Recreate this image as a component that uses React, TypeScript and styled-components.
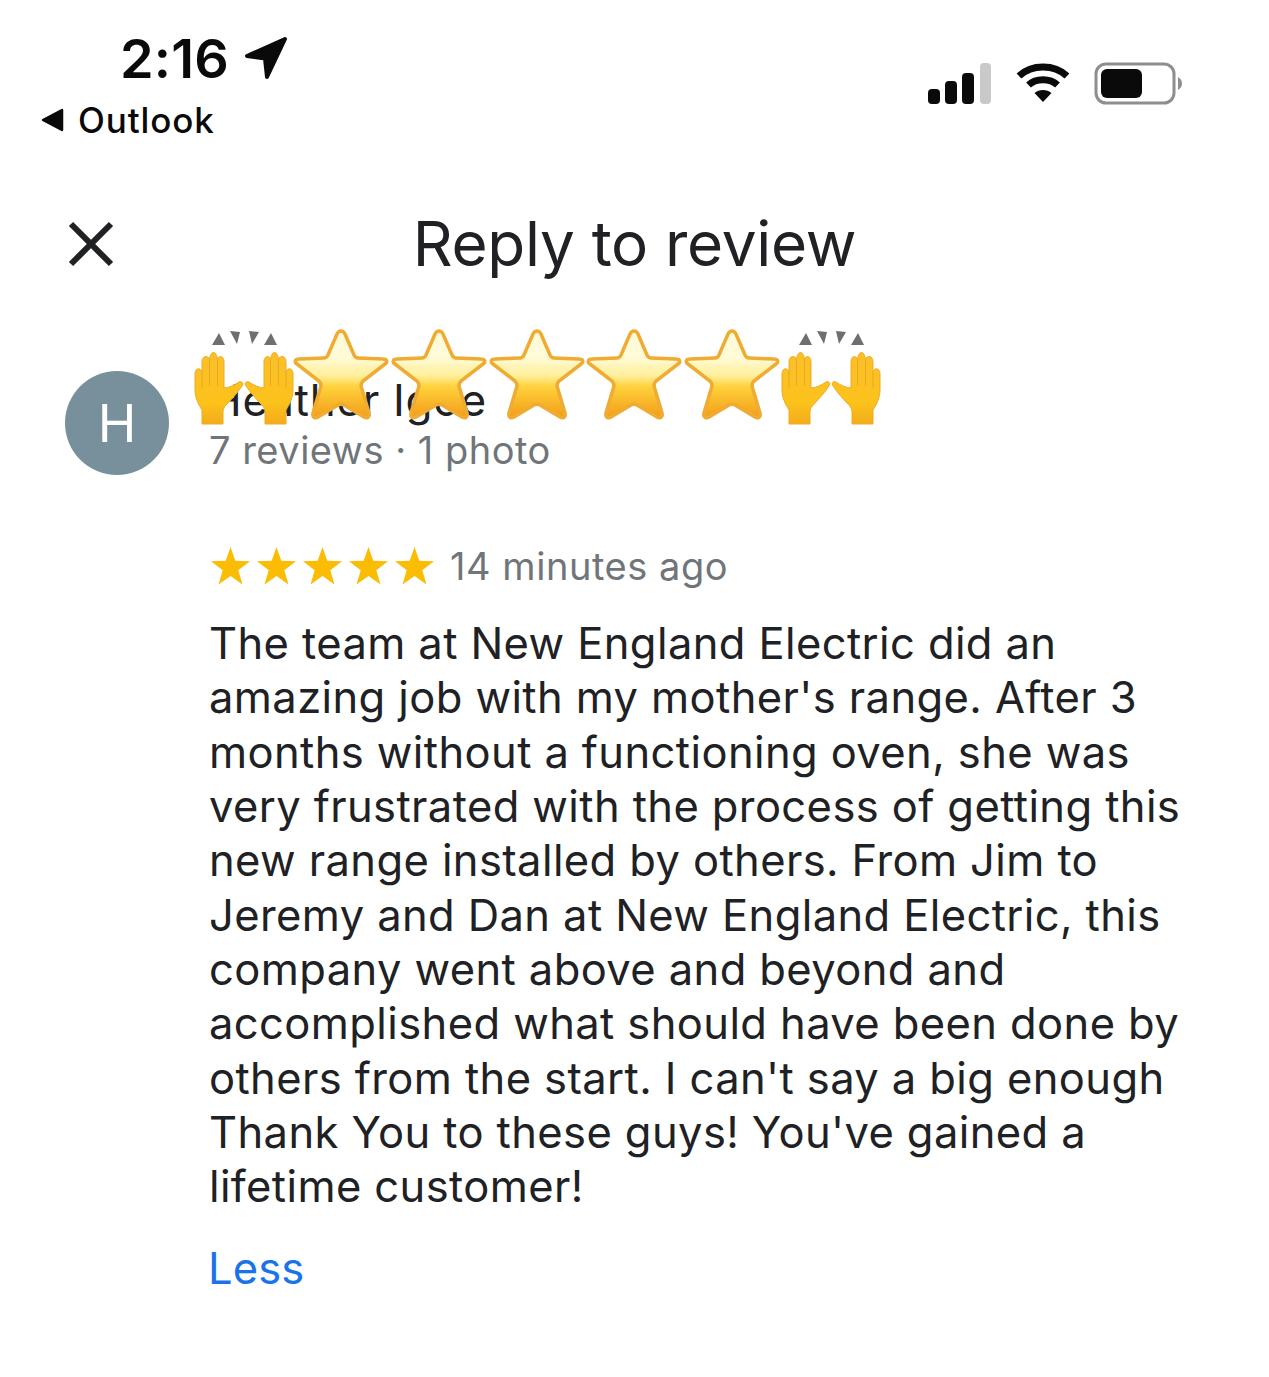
import styled, { createGlobalStyle } from 'styled-components';

const GlobalStyle = createGlobalStyle`
  html, body {
    margin: 0;
    padding: 0;
    background: #fff;
  }
`;

const Page = styled.div`
  width: 1269px;
  height: 1377px;
  overflow: hidden;
  background: #fff;
  color: #202124;
  font-family: Inter, "Liberation Sans", sans-serif;
`;

const StatusBar = styled.div`
  display: flex;
  justify-content: space-between;
  padding: 26px 86px 0 41px;
  height: 130px;
  box-sizing: border-box;
`;

const StatusLeft = styled.div`
  display: flex;
  flex-direction: column;
`;

const TimeRow = styled.div`
  display: flex;
  align-items: center;
  gap: 15px;
  margin-left: 79px;
  height: 64px;
`;

const Time = styled.span`
  font-size: 54px;
  font-weight: 600;
  letter-spacing: 0.2px;
  color: #0a0a0a;
`;

const BackRow = styled.div`
  display: flex;
  align-items: center;
  gap: 14px;
  height: 44px;
  margin-top: 9px;
`;

const BackLabel = styled.span`
  font-size: 35px;
  font-weight: 500;
  letter-spacing: 0.9px;
  color: #0a0a0a;
`;

const StatusRight = styled.div`
  display: flex;
  align-items: center;
  gap: 24px;
  height: 64px;
  margin-top: 26px;
`;

const Header = styled.div`
  display: flex;
  align-items: center;
  justify-content: center;
  position: relative;
  height: 82px;
  margin-top: 72px;
`;

const CloseButton = styled.button`
  position: absolute;
  left: 67px;
  top: 18px;
  padding: 0;
  border: 0;
  background: none;
  display: flex;
`;

const Title = styled.h1`
  margin: 0;
  font-size: 62px;
  font-weight: 400;
  letter-spacing: -0.3px;
  color: #202124;
`;

const Reviewer = styled.div`
  display: flex;
  align-items: center;
  gap: 40px;
  margin-top: 87px;
  padding-left: 65px;
  position: relative;
`;

const Avatar = styled.div`
  width: 104px;
  height: 104px;
  border-radius: 50%;
  background: #78909c;
  color: #fff;
  display: flex;
  align-items: center;
  justify-content: center;
  font-size: 52px;
`;

const ReviewerText = styled.div`
  display: flex;
  flex-direction: column;
  margin-top: 4px;
`;

const Name = styled.div`
  font-size: 44px;
  line-height: 50px;
  letter-spacing: 0.7px;
  color: #202124;
`;

const Meta = styled.div`
  font-size: 38px;
  line-height: 50px;
  letter-spacing: 0.5px;
  color: #70757a;
`;

const Sticker = styled.svg`
  position: absolute;
  left: 190px;
  top: -43px;
  filter: blur(0.6px);
`;

const Body = styled.div`
  padding-left: 209px;
  margin-top: 65px;
`;

const RatingRow = styled.div`
  display: flex;
  align-items: center;
  gap: 16px;
  height: 52px;
`;

const Stars = styled.div`
  display: flex;
  gap: 7px;
  margin-left: 2px;
`;

const Ago = styled.span`
  font-size: 38px;
  letter-spacing: 0.55px;
  color: #70757a;
`;

const ReviewText = styled.div`
  margin-top: 24px;
  font-size: 43.5px;
  line-height: 54.35px;
  letter-spacing: 0.4px;
  color: #202124;
`;

const Line = styled.div`
  white-space: nowrap;
`;

const Less = styled.a`
  display: block;
  margin-top: 27px;
  margin-left: -1px;
  font-size: 43.5px;
  line-height: 54px;
  letter-spacing: 0.1px;
  color: #1a73e8;
`;

const LINES = [
  'The team at New England Electric did an',
  "amazing job with my mother's range. After 3",
  'months without a functioning oven, she was',
  'very frustrated with the process of getting this',
  'new range installed by others. From Jim to',
  'Jeremy and Dan at New England Electric, this',
  'company went above and beyond and',
  'accomplished what should have been done by',
  "others from the start. I can't say a big enough",
  "Thank You to these guys! You've gained a",
  'lifetime customer!',
];

const LocationArrow = () => (
  <svg width="44" height="44" viewBox="0 0 44 44">
    <path d="M41 3 L3 20 L21 22.5 L23 41 Z" fill="#0a0a0a" stroke="#0a0a0a" strokeWidth="4" strokeLinejoin="round" />
  </svg>
);

const BackArrow = () => (
  <svg width="23" height="24" viewBox="0 0 23 24">
    <path d="M21 2 L2 12 L21 22 Z" fill="#0a0a0a" stroke="#0a0a0a" strokeWidth="2.5" strokeLinejoin="round" />
  </svg>
);

const SignalIcon = () => (
  <svg width="64" height="42" viewBox="0 0 64 42">
    <rect x="0" y="26" width="12" height="15" rx="4" fill="#0a0a0a" />
    <rect x="17" y="18" width="12" height="23" rx="4" fill="#0a0a0a" />
    <rect x="34" y="10" width="12" height="31" rx="4" fill="#0a0a0a" />
    <rect x="52" y="0" width="11" height="41" rx="4" fill="#c9c9c9" />
  </svg>
);

const WifiIcon = () => (
  <svg width="54" height="42" viewBox="0 0 54 42">
    <path d="M3 13 C16 1 38 1 51 13" fill="none" stroke="#0a0a0a" strokeWidth="7" />
    <path d="M12.5 22 C20 15 34 15 41.5 22" fill="none" stroke="#0a0a0a" strokeWidth="7" />
    <path d="M18.5 30 C23 26 31 26 35.5 30 L27 39 Z" fill="#0a0a0a" />
  </svg>
);

const BatteryIcon = () => (
  <svg width="89" height="44" viewBox="0 0 89 44">
    <rect x="2" y="2" width="78" height="39" rx="10" fill="none" stroke="#8e8e8e" strokeWidth="3" />
    <rect x="7" y="7" width="41" height="29" rx="6" fill="#0a0a0a" />
    <path d="M84 15 C87 17 88 19 88 21.5 C88 24 87 26 84 28 Z" fill="#8e8e8e" />
  </svg>
);

const CloseIcon = () => (
  <svg width="48" height="48" viewBox="0 0 48 48">
    <path d="M4 4 L44 44 M44 4 L4 44" stroke="#202124" strokeWidth="6" fill="none" />
  </svg>
);

const RatingStar = () => (
  <svg width="39" height="38" viewBox="0 0 39 38">
    <path d="M19.5 0 L24.3 13.8 L39 14.3 L27.3 23.3 L31.5 37.5 L19.5 29 L7.5 37.5 L11.7 23.3 L0 14.3 L14.7 13.8 Z" fill="#fbbc04" />
  </svg>
);

const STAR_X = [104, 202, 300, 397, 495];
const HAND_X = [0, 587];

const HandsSticker = () => (
  <Sticker width="700" height="100" viewBox="0 0 700 100">
    <defs>
      <linearGradient id="star-fill" x1="0" y1="0" x2="0" y2="1">
        <stop offset="0.3" stopColor="#fffbd8" />
        <stop offset="0.52" stopColor="#ffee98" />
        <stop offset="0.64" stopColor="#ffd23c" />
        <stop offset="1" stopColor="#f29c18" />
      </linearGradient>
      <linearGradient id="hand-fill" x1="0" y1="0" x2="0" y2="1">
        <stop offset="0" stopColor="#fbbf2a" />
        <stop offset="0.7" stopColor="#fcc21b" />
        <stop offset="1" stopColor="#f3ac1b" />
      </linearGradient>
      <g id="star">
        <path
          d="M47 3 C49 3 50 4 51 6 L60 27 C61 29 62 30 64 30 L89 31 C93 31 94 34 91 36 L69 53 C67 55 67 56 67 58 L75 85 C76 89 73 91 70 89 L50 77 C48 76 46 76 44 77 L24 89 C21 91 18 89 19 85 L27 58 C27 56 27 55 25 53 L3 36 C0 34 1 31 5 31 L30 30 C32 30 33 29 34 27 L43 6 C44 4 45 3 47 3 Z"
          fill="url(#star-fill)"
          stroke="#efab32"
          strokeWidth="3.5"
        />
      </g>
      <g id="hand">
        <path
          d="M7 72 L7 58 C3 52 0 45 0 38 L0 22 C0 15 7 15 7 22 L7 10 C7 3 14 3 14.5 8 C15 -2 22 -2 22.5 8 C23 3 29 3 29 10 L29 36 C33 36 40 33 44 30 C47 29 49 31 47 34 C43 40 37 47 33 51 C30 54 28 56 28 60 L28 72 Z"
          fill="url(#hand-fill)"
          stroke="#f0aa22"
          strokeWidth="1"
          strokeLinejoin="round"
        />
        <path d="M7 22 L7 36 M14.5 8 L14.5 34 M22.5 8 L22.5 34" stroke="#eba820" strokeWidth="1" fill="none" />
      </g>
      <g id="sparks" fill="#6f6f6f">
        <path d="M0 15 L7 3 L13 15 Z" />
        <path d="M18 1 L28 2 L25 14 Z" />
        <path d="M37 1 L47 2 L40 14 Z" />
        <path d="M52 15 L59 3 L65 15 Z" />
      </g>
    </defs>
    {HAND_X.map((x) => (
      <g key={x}>
        <use href="#sparks" x={x + 22} y="2" />
        <use href="#hand" x={x + 5} y="24" />
        <use href="#hand" transform={`translate(${x + 103} 24) scale(-1 1)`} />
      </g>
    ))}
    {STAR_X.map((x) => (
      <use key={x} href="#star" x={x} y="0" />
    ))}
  </Sticker>
);

const App = () => {
  return (
    <Page>
      <GlobalStyle />
      <StatusBar>
        <StatusLeft>
          <TimeRow>
            <Time>2:16</Time>
            <LocationArrow />
          </TimeRow>
          <BackRow>
            <BackArrow />
            <BackLabel>Outlook</BackLabel>
          </BackRow>
        </StatusLeft>
        <StatusRight>
          <SignalIcon />
          <WifiIcon />
          <BatteryIcon />
        </StatusRight>
      </StatusBar>
      <Header>
        <CloseButton aria-label="Close">
          <CloseIcon />
        </CloseButton>
        <Title>Reply to review</Title>
      </Header>
      <Reviewer>
        <Avatar>H</Avatar>
        <ReviewerText>
          <Name>Heather Igoe</Name>
          <Meta>7 reviews · 1 photo</Meta>
        </ReviewerText>
        <HandsSticker />
      </Reviewer>
      <Body>
        <RatingRow>
          <Stars>
            {[0, 1, 2, 3, 4].map((i) => (
              <RatingStar key={i} />
            ))}
          </Stars>
          <Ago>14 minutes ago</Ago>
        </RatingRow>
        <ReviewText>
          {LINES.map((line) => (
            <Line key={line}>{line}</Line>
          ))}
        </ReviewText>
        <Less>Less</Less>
      </Body>
    </Page>
  );
};

export default App;
